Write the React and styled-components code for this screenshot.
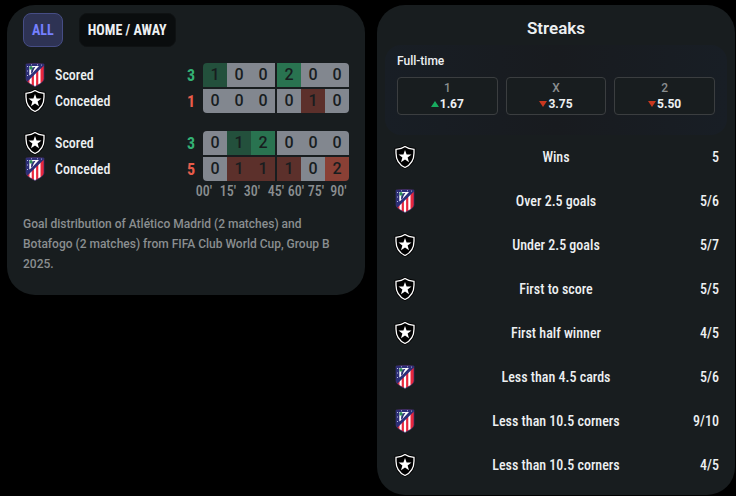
import React from "react";
import styled, { createGlobalStyle } from "styled-components";

const narrow = `"Roboto Condensed", Roboto, sans-serif`;
const wide = `Roboto, sans-serif`;

const surface = "#181d1f";
const text = "#edf0f2";
const muted = "#8a8e90";
const green = "#33b174";
const red = "#e85c4a";

const goals = [
  {
    id: "first",
    rows: [
      { team: "atletico", label: "Scored", total: 3, cells: [1, 0, 0, 2, 0, 0] },
      { team: "botafogo", label: "Conceded", total: 1, cells: [0, 0, 0, 0, 1, 0] },
    ],
  },
  {
    id: "second",
    rows: [
      { team: "botafogo", label: "Scored", total: 3, cells: [0, 1, 2, 0, 0, 0] },
      { team: "atletico", label: "Conceded", total: 5, cells: [0, 1, 1, 1, 0, 2] },
    ],
  },
];

const minutes = ["00'", "15'", "30'", "45'", "60'", "75'", "90'"];

const odds = [
  { name: "1", value: "1.67", up: true },
  { name: "X", value: "3.75", up: false },
  { name: "2", value: "5.50", up: false },
];

const streaks = [
  { team: "botafogo", name: "Wins", value: "5" },
  { team: "atletico", name: "Over 2.5 goals", value: "5/6" },
  { team: "botafogo", name: "Under 2.5 goals", value: "5/7" },
  { team: "botafogo", name: "First to score", value: "5/5" },
  { team: "botafogo", name: "First half winner", value: "4/5" },
  { team: "atletico", name: "Less than 4.5 cards", value: "5/6" },
  { team: "atletico", name: "Less than 10.5 corners", value: "9/10" },
  { team: "botafogo", name: "Less than 10.5 corners", value: "4/5" },
];

function AtleticoCrest() {
  return (
    <CrestSvg viewBox="0 0 24 24" role="img" aria-label="Atlético Madrid">
      <path
        fill="#e9263c"
        d="M3 1Q12 0 21 1V16C20.500 19.500 16 21.500 12 23.500C8 21.500 3.500 19.500 3 16Z"
      />
      <path
        fill="#fff"
        d="M6.500 10h2.200v11.500L6.500 20.300zM10.900 5h2.200v18l-1.100.5-1.100-.5zM15.300 2h2.200v18.300l-2.200 1.200z"
      />
      <path fill="#2c2e78" d="M3 1Q12 0 21 1V2.500L4.500 18.500Q3.200 17.500 3 16Z" />
      <path fill="#fff" d="M6.300 3H16L9 10.500l-2.700 2z" />
      <path fill="#2c2e78" d="M9.500 4.500l3-.7-2 3.200-.8 2.500-1.700 1.500.3-4z" />
      <path fill="#2d8b57" d="M6.500 4.500a1.500 1.500 0 0 1 3 0v2h-3z" />
      <path
        fill="#b9bce0"
        d="M4 3h1v1H4zM4 7.500h1v1H4zM4 12h1v1H4zM8 1.200h1v1H8zM14 1.200h1v1h-1zM18 1.500h1v1h-1z"
      />
      <path
        fill="none"
        stroke="#35306f"
        strokeWidth=".7"
        d="M3 1Q12 0 21 1V16C20.500 19.500 16 21.500 12 23.500C8 21.500 3.500 19.500 3 16Z"
      />
    </CrestSvg>
  );
}

function BotafogoCrest() {
  return (
    <CrestSvg viewBox="0 0 24 24" role="img" aria-label="Botafogo">
      <path
        fill="#000"
        stroke="#000"
        strokeWidth="3"
        d="M12 1.500C9.500 3.300 6.500 4 3 4.300V8c0 7 3.500 12 9 14.500C17.500 20 21 15 21 8V4.300C17.500 4 14.500 3.300 12 1.500z"
      />
      <path
        fill="#000"
        stroke="#fff"
        strokeWidth="1.300"
        d="M12 1.500C9.500 3.300 6.500 4 3 4.300V8c0 7 3.500 12 9 14.500C17.500 20 21 15 21 8V4.300C17.500 4 14.500 3.300 12 1.500z"
      />
      <path
        fill="#fff"
        d="M12 5l1.600 4.400 4.900.2-3.900 3 1.400 4.700L12 14.600 8 17.300l1.400-4.700-3.900-3 4.900-.2z"
      />
    </CrestSvg>
  );
}

function Crest({ team }) {
  return team === "atletico" ? <AtleticoCrest /> : <BotafogoCrest />;
}

function GoalRow({ row, last }) {
  const scored = row.label === "Scored";
  const half = (from) =>
    row.cells.slice(from, from + 3).map((count, i) => (
      <Cell key={i} $count={count} $scored={scored}>
        {count}
      </Cell>
    ));
  return (
    <GoalRowWrapper>
      <Crest team={row.team} />
      <GoalLabel>{row.label}</GoalLabel>
      <GoalTotal $scored={scored}>{row.total}</GoalTotal>
      <Halves $last={last}>
        <Half>{half(0)}</Half>
        <Half>{half(3)}</Half>
      </Halves>
    </GoalRowWrapper>
  );
}

function GoalDistribution() {
  return (
    <GoalPanel>
      <Filters>
        <Filter type="button" $active>
          ALL
        </Filter>
        <Filter type="button">HOME / AWAY</Filter>
      </Filters>
      <Groups>
        {goals.map((group) => (
          <Group key={group.id}>
            {group.rows.map((row, i) => (
              <GoalRow key={row.label} row={row} last={i === 1} />
            ))}
          </Group>
        ))}
      </Groups>
      <Minutes>
        {minutes.map((minute) => (
          <span key={minute}>{minute}</span>
        ))}
      </Minutes>
      <Caption>
        Goal distribution of Atlético Madrid (2 matches) and Botafogo (2
        matches) from FIFA Club World Cup, Group B 2025.
      </Caption>
    </GoalPanel>
  );
}

function Streaks() {
  return (
    <StreaksPanel>
      <Title>Streaks</Title>
      <Odds>
        <OddsTitle>Full-time</OddsTitle>
        <OddsRow>
          {odds.map((odd) => (
            <Odd key={odd.name} href="#">
              <OddName>{odd.name}</OddName>
              <OddValue>
                <Arrow viewBox="0 0 8 6" aria-hidden="true">
                  <path
                    fill={odd.up ? "#18ab5f" : "#c9371f"}
                    d={odd.up ? "M4 0l4 6H0z" : "M0 0h8L4 6z"}
                  />
                </Arrow>
                {odd.value}
              </OddValue>
            </Odd>
          ))}
        </OddsRow>
      </Odds>
      <StreakList>
        {streaks.map((streak, i) => (
          <Streak key={i}>
            <Crest team={streak.team} />
            <span>{streak.name}</span>
            <StreakValue>{streak.value}</StreakValue>
          </Streak>
        ))}
      </StreakList>
    </StreaksPanel>
  );
}

export default function App() {
  return (
    <>
      <GlobalStyle />
      <Page>
        <GoalDistribution />
        <Streaks />
      </Page>
    </>
  );
}

const GlobalStyle = createGlobalStyle`
  * {
    box-sizing: border-box;
  }

  body {
    margin: 0;
    background: #000;
    color: ${text};
    font-family: ${wide};
  }
`;

const Page = styled.main`
  display: grid;
  grid-template-columns: 1fr 1fr;
  gap: 12px;
  align-items: start;
  padding: 5px 1px 1px 7px;
`;

const Panel = styled.section`
  border-radius: 28px;
  background: ${surface};
`;

const GoalPanel = styled(Panel)`
  padding: 8px 16px 21px;
`;

const StreaksPanel = styled(Panel)`
  padding: 11px 8px 8px;
`;

const CrestSvg = styled.svg`
  display: block;
  flex: none;
  width: 24px;
  height: 24px;
`;

const Filters = styled.div`
  display: flex;
  gap: 16px;
`;

const Filter = styled.button`
  height: 34px;
  padding: 0 8px;
  border: 1px solid ${(props) => (props.$active ? "#464d85" : "#0f1213")};
  border-radius: 8px;
  background: ${(props) => (props.$active ? "#2e3354" : "#0a0d0e")};
  color: ${(props) => (props.$active ? "#7580ff" : text)};
  font-family: ${narrow};
  font-size: 14px;
  font-weight: 700;
`;

const Groups = styled.div`
  display: flex;
  flex-direction: column;
  gap: 18px;
  margin-top: 16px;
`;

const Group = styled.div`
  display: flex;
  flex-direction: column;
  gap: 2px;
`;

const GoalRowWrapper = styled.div`
  display: flex;
  align-items: center;
  height: 24px;
`;

const GoalLabel = styled.span`
  flex: 1;
  margin-left: 8px;
  font-family: ${narrow};
  font-size: 14px;
  font-weight: 500;
`;

const GoalTotal = styled.span`
  margin-right: 8px;
  color: ${(props) => (props.$scored ? green : red)};
  font-family: ${narrow};
  font-size: 16px;
  font-weight: 700;
`;

const Halves = styled.div`
  display: flex;
  gap: 2px;
  overflow: hidden;
  border-radius: ${(props) => (props.$last ? "0 0 4px 4px" : "4px 4px 0 0")};
`;

const Half = styled.div`
  display: flex;
`;

const cellColor = ({ $count, $scored }) => {
  if ($count === 0) return "#82878f";
  if ($scored) return $count === 1 ? "#23503c" : "#297350";
  return $count === 1 ? "#5c302b" : "#8a4035";
};

const Cell = styled.span`
  width: 24px;
  height: 24px;
  background: ${cellColor};
  color: ${surface};
  font-size: 16px;
  font-weight: 500;
  line-height: 24px;
  text-align: center;
`;

const Minutes = styled.div`
  display: grid;
  grid-template-columns: repeat(4, 24px) 16px 24px 21px;
  justify-content: end;
  justify-items: center;
  color: ${muted};
  font-family: ${narrow};
  font-size: 14px;
  font-weight: 500;
  line-height: 20px;
`;

const Caption = styled.p`
  margin: 13px 0 0;
  color: ${muted};
  font-size: 12px;
  font-weight: 500;
  line-height: 20px;
`;

const Title = styled.h2`
  margin: 0;
  font-size: 17px;
  font-weight: 600;
  line-height: 24px;
  text-align: center;
`;

const Odds = styled.div`
  margin-top: 5px;
  padding: 8px 12px 20px;
  border-radius: 16px;
  background: linear-gradient(90deg, #181e25, #181b1f 50%, #181e25);
`;

const OddsTitle = styled.div`
  font-size: 12px;
  font-weight: 500;
  line-height: 16px;
`;

const OddsRow = styled.div`
  display: grid;
  grid-template-columns: repeat(3, 1fr);
  gap: 8px;
  margin-top: 8px;
`;

const Odd = styled.a`
  display: flex;
  flex-direction: column;
  align-items: center;
  padding: 2px 0;
  border: 1px solid #3b3e40;
  border-radius: 4px;
  background: ${surface};
  color: ${text};
  text-decoration: none;
`;

const OddName = styled.span`
  color: ${muted};
  font-size: 12px;
  font-weight: 500;
  line-height: 16px;
`;

const OddValue = styled.span`
  display: flex;
  align-items: center;
  gap: 1px;
  font-size: 12px;
  font-weight: 700;
  line-height: 16px;
`;

const Arrow = styled.svg`
  width: 8px;
  height: 6px;
`;

const StreakList = styled.ul`
  margin: 0;
  padding: 0 8px;
  list-style: none;
`;

const Streak = styled.li`
  display: grid;
  grid-template-columns: 48px 1fr 48px;
  align-items: center;
  height: 44px;
  font-family: ${narrow};
  font-size: 14px;
  font-weight: 500;
  text-align: center;
`;

const StreakValue = styled.span`
  text-align: right;
`;
